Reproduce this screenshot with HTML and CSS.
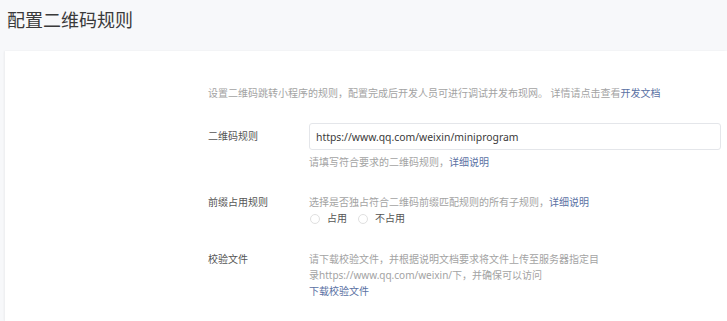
FILE: index.html
```html
<!DOCTYPE html>
<html lang="zh-CN">
<head>
  <meta charset="UTF-8" />
  <title>配置二维码规则</title>
  <link rel="stylesheet" href="styles.css">
</head>
<body>
  <h1 class="page-title">配置二维码规则</h1>
  <div class="card">
    <p class="intro">设置二维码跳转小程序的规则，配置完成后开发人员可进行调试并发布现网。 详情请点击查看<a href="#">开发文档</a></p>

    <div class="row row-rule">
      <label class="label">二维码规则</label>
      <div class="field">
        <input type="text" class="input" value="https://www.qq.com/weixin/miniprogram" />
        <p class="tips">请填写符合要求的二维码规则，<a href="#">详细说明</a></p>
      </div>
    </div>

    <div class="row row-prefix">
      <label class="label">前缀占用规则</label>
      <div class="field">
        <p class="tips">选择是否独占符合二维码前缀匹配规则的所有子规则，<a href="#">详细说明</a></p>
        <div class="radios">
          <label class="radio"><span class="dot"></span>占用</label>
          <label class="radio"><span class="dot"></span>不占用</label>
        </div>
      </div>
    </div>

    <div class="row row-file">
      <label class="label">校验文件</label>
      <div class="field">
        <p class="tips">请下载校验文件，并根据说明文档要求将文件上传至服务器指定目<br>录https://www.qq.com/weixin/下，并确保可以访问</p>
        <a href="#" class="link">下载校验文件</a>
      </div>
    </div>
  </div>
</body>
</html>
```

FILE: styles.css
```css
body {
  margin: 0;
  background: #f7f8fa;
  font-family: "Noto Sans", "Noto Sans CJK SC", sans-serif;
  color: #4a4a4a;
}
.page-title {
  margin: 0;
  height: 51px;
  padding: 8px 0 0 7px;
  box-sizing: border-box;
  font-size: 18px;
  font-weight: normal;
  line-height: 24px;
  color: #3a3a3a;
}
.card {
  margin-left: 5px;
  background: #fff;
  height: calc(100vh - 51px);
  box-sizing: border-box;
  overflow: hidden;
  padding: 34px 6px 0 203px;
  box-shadow: -1px 0 2px rgba(0, 0, 0, 0.05);
}
a {
  color: #5a71a3;
  text-decoration: none;
}
p {
  margin: 0;
}
.intro {
  font-size: 10px;
  line-height: 16px;
  color: #a3a3a3;
}
.row {
  display: flex;
}
.label {
  width: 101px;
  flex-shrink: 0;
  font-size: 10px;
  line-height: 16px;
  color: #555;
}
.field {
  flex: 1;
}
.tips {
  font-size: 10px;
  line-height: 16px;
  color: #a3a3a3;
}
.row-rule {
  margin-top: 22px;
}
.row-rule .label {
  padding-top: 5px;
}
.input {
  display: block;
  width: 100%;
  height: 27px;
  box-sizing: border-box;
  border: 1px solid #e4e6ea;
  border-radius: 3px;
  padding: 0 6px;
  font-family: inherit;
  font-size: 10.4px;
  color: #3a3a3a;
  margin-bottom: 4px;
}
.row-prefix {
  margin-top: 24px;
}
.radios {
  display: flex;
  gap: 10px;
  font-size: 10px;
  line-height: 17px;
  color: #555;
}
.radio {
  display: flex;
  align-items: center;
}
.dot {
  width: 10px;
  height: 10px;
  border: 1px solid #e0e0e0;
  border-radius: 50%;
  box-sizing: border-box;
  margin: 0 7px 0 1px;
}
.row-file {
  margin-top: 24px;
}
.link {
  font-size: 10px;
  line-height: 16px;
  display: block;
}
```
